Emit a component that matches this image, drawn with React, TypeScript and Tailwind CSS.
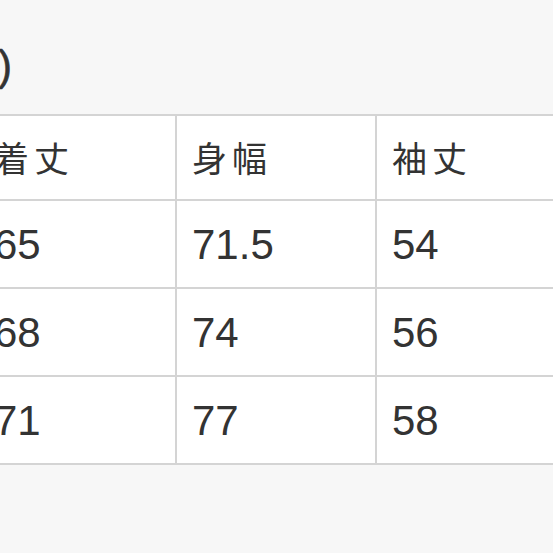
import React from "react";

const rows = [
  ["65", "71.5", "54"],
  ["68", "74", "56"],
  ["71", "77", "58"],
];
const heads = ["着丈", "身幅", "袖丈"];

export default function App() {
  return (
    <div className="w-[553px] h-[553px] overflow-hidden bg-[#f7f7f7] text-[#333333] font-['Liberation_Sans',Arial,sans-serif]">
      <div className="pt-[45px] h-[114px] text-[42px] leading-[42px] ml-[-2px] [-webkit-text-stroke:0.6px_#333333]">
        )
      </div>
      <div className="ml-[-23px] w-[600px] grid grid-cols-[198px_200px_200px] border-t-2 border-l-2 border-[#d4d4d4] bg-white">
        {heads.map((h) => (
          <div
            key={h}
            className="h-[85px] border-r-2 border-b-2 border-[#d4d4d4] flex items-center pl-[15px] text-[35px] tracking-[5px] font-['Noto_Sans_CJK_JP',sans-serif]"
          >
            {h}
          </div>
        ))}
        {rows.map((r, i) =>
          r.map((v, j) => (
            <div
              key={i + "-" + j}
              className="h-[88px] border-r-2 border-b-2 border-[#d4d4d4] flex items-center pl-[15px] text-[42px]"
            >
              {v}
            </div>
          ))
        )}
      </div>
    </div>
  );
}
